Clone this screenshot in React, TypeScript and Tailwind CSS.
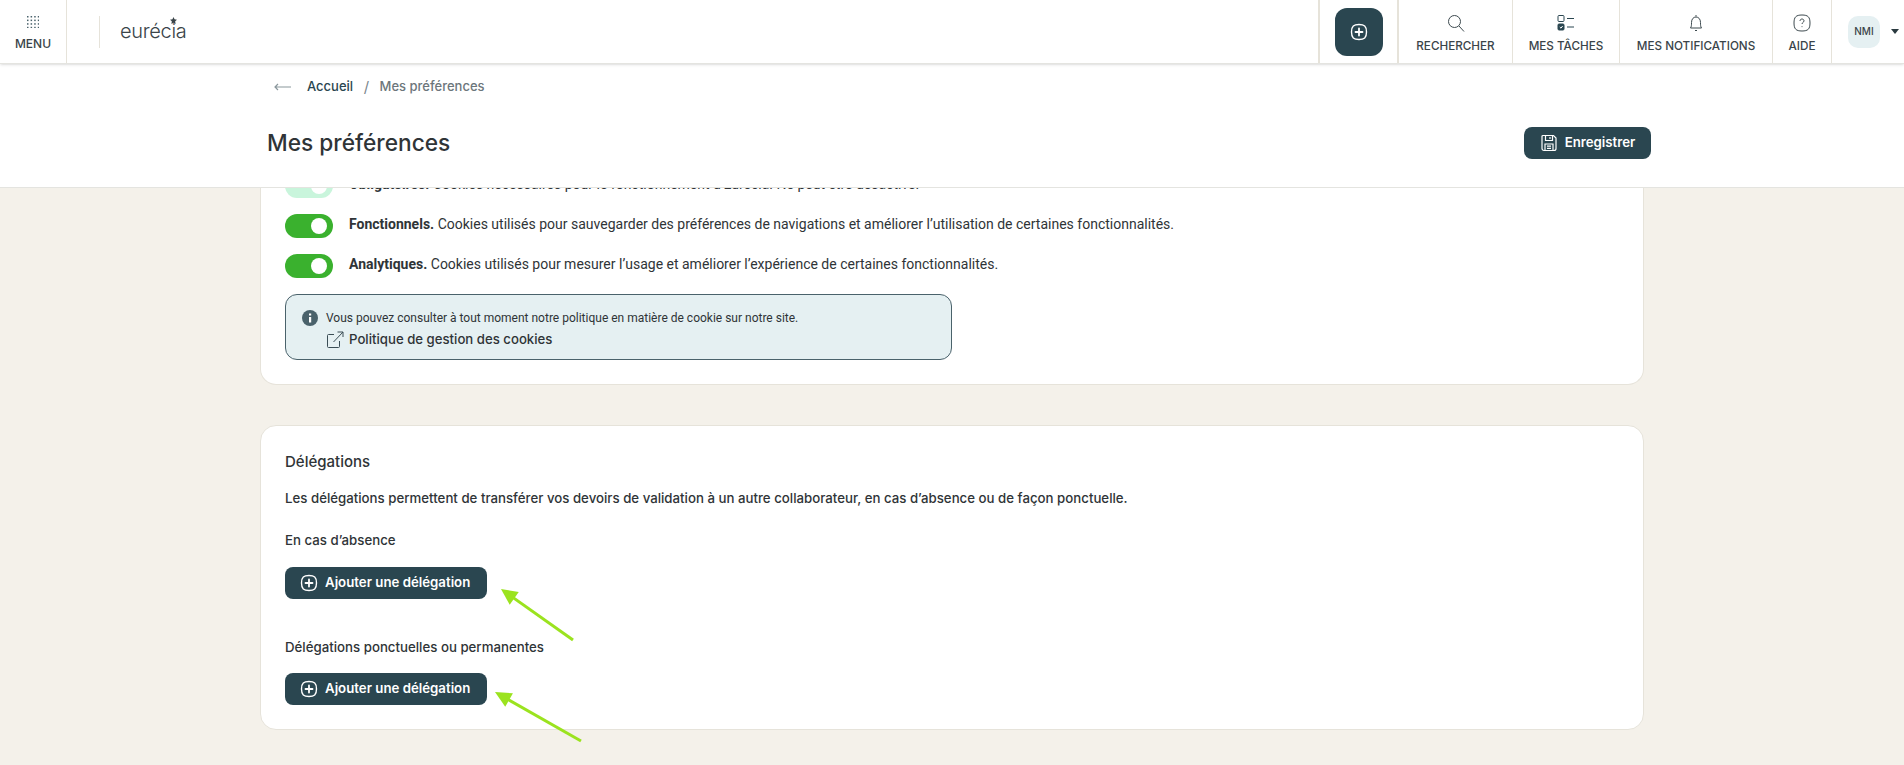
const heading = "font-['Inter',sans-serif]";
const body = "font-['Roboto',sans-serif]";

function PlusSquircle({ size = 18 }: { size?: number }) {
  return (
    <svg width={size} height={size} viewBox="0 0 18 18" fill="none" stroke="currentColor" strokeWidth="1.4" strokeLinecap="round">
      <path d="M9 1.5c5.2 0 7.5 1.6 7.5 7.5s-2.3 7.5-7.5 7.5S1.500 14.900 1.500 9 3.800 1.500 9 1.500Z" />
      <path d="M9 5.500v7M5.500 9h7" strokeWidth="1.800" />
    </svg>
  );
}

function MenuDots() {
  const dots = [0, 1, 2, 3];
  return (
    <svg width="12" height="12" viewBox="0 0 12 12" fill="#4a626b">
      {dots.map((r) => dots.map((c) => <rect key={`${r}-${c}`} x={c * 3.6} y={r * 3.6} width="1.500" height="1.500" />))}
    </svg>
  );
}

function SearchIcon() {
  return (
    <svg width="18" height="18" viewBox="0 0 18 18" fill="none" stroke="#3d4a4f" strokeWidth="1">
      <circle cx="7.500" cy="7.500" r="6" />
      <path d="M12 12l5 5.500" />
    </svg>
  );
}

function TasksIcon() {
  return (
    <svg width="18" height="18" viewBox="0 0 18 18" fill="none" stroke="#2a4650" strokeWidth="1">
      <rect x="1" y="1.500" width="6" height="6" rx="1" />
      <path d="M10 4.500h7M10 13h7" />
      <rect x="1" y="10" width="6" height="6" rx="1" fill="#2a4650" />
      <path d="M2.800 13l1.200 1.200 1.600-2.200" stroke="#fff" />
    </svg>
  );
}

function BellIcon() {
  return (
    <svg width="18" height="18" viewBox="0 0 18 18" fill="none" stroke="#3d4a4f" strokeWidth="1">
      <path d="M9 1v1.500M3.500 14c1-1.500 1-3 1-5.500C4.500 5 6.500 3 9 3s4.500 2 4.500 5.500c0 2.500 0 4 1 5.500h-11Z" />
      <path d="M8 16.500h2" strokeWidth="1.200" />
    </svg>
  );
}

function HelpIcon() {
  return (
    <svg width="18" height="18" viewBox="0 0 18 18" fill="none" stroke="#3d4a4f" strokeWidth="1">
      <path d="M9 1c6 0 8 2 8 8s-2 8-8 8-8-2-8-8 2-8 8-8Z" />
      <path d="M7 7c0-1.200.900-2 2-2s2 .8 2 1.900c0 1.500-2 1.600-2 3.100" />
      <path d="M9 12.300v.8" />
    </svg>
  );
}

function SaveIcon() {
  return (
    <svg width="18" height="18" viewBox="0 0 18 18" fill="none" stroke="currentColor" strokeWidth="1.200">
      <path d="M3 1.500h10.500L16 4v10.500a2 2 0 0 1-2 2H4a2 2 0 0 1-2-2v-12a1 1 0 0 1 1-1Z" />
      <path d="M5.500 1.500v5h7v-5M10 3v2M5 16.500V10h8v6.500M7 12.200h4M7 14.300h4" />
    </svg>
  );
}

function NavItem({ icon, label, width }: { icon: React.ReactNode; label: string; width: string }) {
  return (
    <div className={`${width} h-full shrink-0 flex flex-col items-center border-r border-[#e6e3da] pt-[14px]`}>
      <div className="h-[18px] flex items-center justify-center">{icon}</div>
      <span className={`${heading} mt-[5px] text-[11.700px] leading-[18px] font-medium text-[#3a4449] whitespace-nowrap`}>{label}</span>
    </div>
  );
}

function Toggle({ light = false }: { light?: boolean }) {
  return (
    <div className={`w-12 h-6 shrink-0 rounded-full flex items-center justify-end pr-[6px] ${light ? 'bg-[#c9f5dc]' : 'bg-[#3ab12e]'}`}>
      <div className="w-4 h-4 rounded-full bg-white" />
    </div>
  );
}

function CookieRow({ title, text, light }: { title: string; text: string; light?: boolean }) {
  return (
    <div className="flex items-center gap-4 h-6">
      <Toggle light={light} />
      <p className={`${body} -mt-1 text-[14px] text-[#2f3437] whitespace-nowrap`}>
        <strong className="font-bold">{title}</strong> {text}
      </p>
    </div>
  );
}

function AddButton() {
  return (
    <button className={`${heading} w-[202px] h-8 rounded-lg bg-[#2a4650] text-white text-[13.250px] font-semibold flex items-center gap-[7px] pl-[15px]`}>
      <PlusSquircle />
      Ajouter une délégation
    </button>
  );
}

function Arrow({ x1, y1, x2, y2, left, top, width, height }: { x1: number; y1: number; x2: number; y2: number; left: string; top: string; width: number; height: number }) {
  const angle = Math.atan2(y2 - y1, x2 - x1);
  const len = 18;
  const wing = 0.45;
  const ax = x2 - len * Math.cos(angle - wing);
  const ay = y2 - len * Math.sin(angle - wing);
  const bx = x2 - len * Math.cos(angle + wing);
  const by = y2 - len * Math.sin(angle + wing);
  return (
    <svg className={`absolute ${left} ${top}`} width={width} height={height} viewBox={`0 0 ${width} ${height}`}>
      <line x1={x1} y1={y1} x2={x2 - 8 * Math.cos(angle)} y2={y2 - 8 * Math.sin(angle)} stroke="#9be31f" strokeWidth="3" />
      <polygon points={`${x2},${y2} ${ax},${ay} ${bx},${by}`} fill="#9be31f" />
    </svg>
  );
}

export default function App() {
  return (
    <div className="relative h-[765px] overflow-hidden bg-[#f4f1ea] flex flex-col">
      {/* top bar */}
      <header className="h-16 shrink-0 bg-white border-b border-[#e4e4e0] shadow-sm flex items-center z-20">
        <div className="w-[67px] h-full shrink-0 flex flex-col items-center border-r border-[#e6e3da] pt-[16px]">
          <MenuDots />
          <span className={`${heading} mt-[7px] text-[12px] leading-[18px] font-medium text-[#3a4449]`}>MENU</span>
        </div>
        <div className="ml-8 h-8 border-l border-[#e6e3da]" />
        <div className="relative ml-5 mb-[1px]">
          <span className={`${heading} text-[20px] font-light tracking-[-0.3px] text-[#3a4449]`}>eurécia</span>
          <svg className="absolute left-[50px] top-[1px]" width="7" height="7" viewBox="0 0 10 10" fill="#3a4449">
            <path d="M5 0l1.500 3.200L10 3.800 7.400 6.200 8 10 5 8.200 2 10l.6-3.800L0 3.800l3.500-.6Z" />
          </svg>
        </div>

        <div className="ml-auto h-full flex">
          <div className="w-[81px] h-full shrink-0 flex items-center justify-center border-x-2 border-[#e6e3da]">
            <div className="w-12 h-12 rounded-xl bg-[#2a4650] text-white flex items-center justify-center">
              <PlusSquircle />
            </div>
          </div>
          <NavItem icon={<SearchIcon />} label="RECHERCHER" width="w-[114px]" />
          <NavItem icon={<TasksIcon />} label="MES TÂCHES" width="w-[107px]" />
          <NavItem icon={<BellIcon />} label="MES NOTIFICATIONS" width="w-[153px]" />
          <NavItem icon={<HelpIcon />} label="AIDE" width="w-[59px]" />
          <div className="w-[72px] h-full shrink-0 flex items-center pl-[16px]">
            <div className={`${heading} w-8 h-8 rounded-[10px] bg-[#e5f0f2] flex items-center justify-center text-[10px] font-medium text-[#3a4449]`}>NMI</div>
            <div className="ml-[11px] w-0 h-0 border-x-[4px] border-x-transparent border-t-[5px] border-t-[#2a3a40]" />
          </div>
        </div>
      </header>

      {/* page title */}
      <div className="h-[124px] shrink-0 bg-white border-b border-[#e4e4e0] z-10">
        <div className="w-[1384px] mx-auto pl-[7px]">
          <div className={`${heading} h-[46px] flex items-center text-[13px] font-medium pl-[7px]`}>
            <svg width="17" height="8" viewBox="0 0 17 8" fill="none" stroke="#8a979c" strokeWidth="1.200"><path d="M17 4H1M4 1 1 4l3 3" /></svg>
            <span className="ml-4 text-[#2a4650]">Accueil</span>
            <span className="mx-[10.500px] text-[#7b878c] font-normal text-[15px]">/</span>
            <span className="text-[#6c767b]">Mes préférences</span>
          </div>
          <div className="flex items-center justify-between mt-4 w-[1384px]">
            <h1 className={`${heading} text-[22.700px] font-medium text-[#2f3437]`}>Mes préférences</h1>
            <button className={`${heading} w-[127px] h-8 rounded-lg bg-[#2a4650] text-white text-[13.250px] font-semibold flex items-center justify-center gap-[7px]`}>
              <SaveIcon />
              Enregistrer
            </button>
          </div>
        </div>
      </div>

      {/* scrolled content */}
      <main className="flex-1 min-h-0 overflow-hidden">
        <div className="w-[1384px] mx-auto -mt-[14px] flex flex-col gap-10">
          <section className="bg-white rounded-b-2xl border border-t-0 border-[#e6e3da] px-6 pb-6 flex flex-col gap-4">
            <CookieRow light title="Obligatoires." text="Cookies nécessaires pour le fonctionnement d'Eurécia. Ne peut être désactivé." />
            <CookieRow title="Fonctionnels." text="Cookies utilisés pour sauvegarder des préférences de navigations et améliorer l’utilisation de certaines fonctionnalités." />
            <CookieRow title="Analytiques." text="Cookies utilisés pour mesurer l’usage et améliorer l’expérience de certaines fonctionnalités." />
            <div className="w-[667px] h-[66px] rounded-xl border border-[#4a626b] bg-[#e5f0f2] pl-4 pt-[13px]">
              <div className="flex items-center gap-[8px] h-5">
                <svg width="16" height="16" viewBox="0 0 16 16">
                  <circle cx="8" cy="8" r="8" fill="#4a626b" />
                  <rect x="7" y="7" width="2.200" height="5.500" fill="#fff" />
                  <rect x="7" y="3.500" width="2.200" height="2" fill="#fff" />
                </svg>
                <span className={`${body} text-[12px] text-[#2f3437]`}>Vous pouvez consulter à tout moment notre politique en matière de cookie sur notre site.</span>
              </div>
              <div className="flex items-center gap-[5px] h-5 mt-[2px] pl-[24px]">
                <svg width="18" height="18" viewBox="0 0 18 18" fill="none" stroke="#3a4d55" strokeWidth="1">
                  <path d="M8 3.500H2.500a1 1 0 0 0-1 1v11a1 1 0 0 0 1 1h10a1 1 0 0 0 1-1V10M7.500 11 17 1M11.500 1H17v5" />
                </svg>
                <span className={`${heading} text-[13.200px] font-medium text-[#2f3437]`}>Politique de gestion des cookies</span>
              </div>
            </div>
          </section>

          <section className="h-[305px] bg-white rounded-2xl border border-[#e6e3da] px-6 pt-[24px]">
            <h2 className={`${heading} text-[15px] leading-6 font-medium text-[#2f3437]`}>Délégations</h2>
            <p className={`${heading} mt-3 text-[13.250px] leading-6 font-medium text-[#2f3437]`}>
              Les délégations permettent de transférer vos devoirs de validation à un autre collaborateur, en cas d’absence ou de façon ponctuelle.
            </p>
            <h3 className={`${heading} mt-[18px] text-[13.250px] leading-6 font-medium text-[#2f3437]`}>En cas d’absence</h3>
            <div className="mt-[15px]"><AddButton /></div>
            <h3 className={`${heading} mt-9 text-[13.250px] leading-6 font-medium text-[#2f3437]`}>Délégations ponctuelles ou permanentes</h3>
            <div className="mt-[14px]"><AddButton /></div>
          </section>
        </div>
      </main>

      {/* annotation arrows */}
      <Arrow left="left-[495px]" top="top-[583px]" width={85} height={62} x1={78} y1={57} x2={6} y2={6} />
      <Arrow left="left-[490px]" top="top-[687px]" width={95} height={58} x1={91} y1={54} x2={5} y2={5} />
    </div>
  );
}
